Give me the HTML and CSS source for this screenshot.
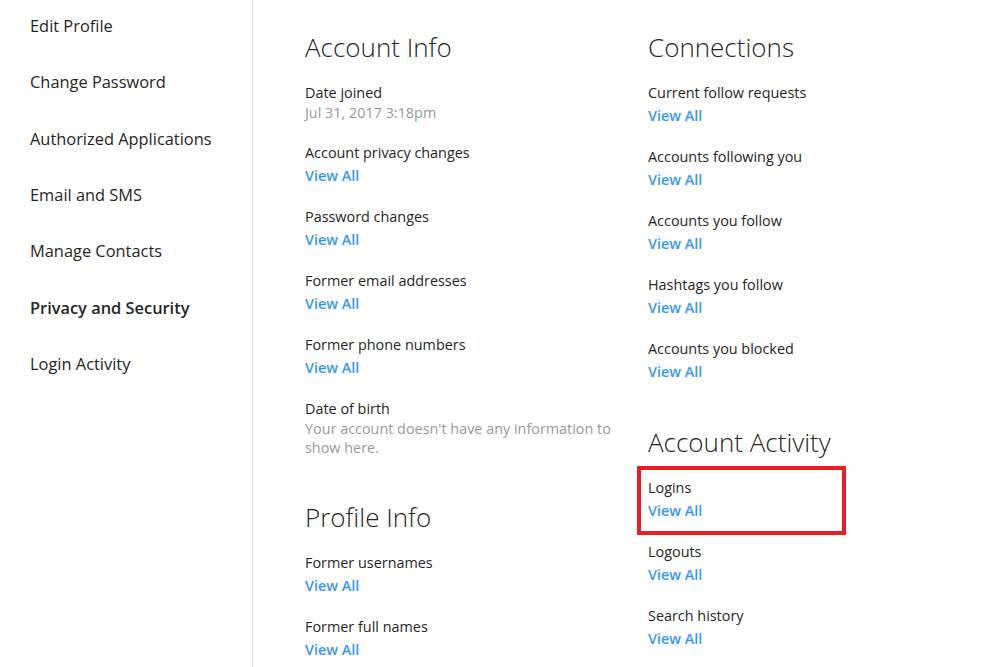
FILE: index.html
```html
<!DOCTYPE html>
<html>
<head>
<meta charset="utf-8">
<link rel="stylesheet" href="styles.css">
</head>
<body>
<div class="page">
  <nav class="sidebar">
    <a class="nav-item">Edit Profile</a>
    <a class="nav-item">Change Password</a>
    <a class="nav-item">Authorized Applications</a>
    <a class="nav-item">Email and SMS</a>
    <a class="nav-item">Manage Contacts</a>
    <a class="nav-item active">Privacy and Security</a>
    <a class="nav-item">Login Activity</a>
  </nav>
  <main class="main">
    <div class="column col-left">
      <section class="section">
        <h2 class="heading">Account Info</h2>
        <div class="item">
          <div class="label">Date joined</div>
          <div class="value">Jul 31, 2017 3:18pm</div>
        </div>
        <div class="item">
          <div class="label">Account privacy changes</div>
          <a class="link">View All</a>
        </div>
        <div class="item">
          <div class="label">Password changes</div>
          <a class="link">View All</a>
        </div>
        <div class="item">
          <div class="label">Former email addresses</div>
          <a class="link">View All</a>
        </div>
        <div class="item">
          <div class="label">Former phone numbers</div>
          <a class="link">View All</a>
        </div>
        <div class="item">
          <div class="label">Date of birth</div>
          <div class="value">Your account doesn't have any information to show here.</div>
        </div>
      </section>
      <section class="section">
        <h2 class="heading">Profile Info</h2>
        <div class="item">
          <div class="label">Former usernames</div>
          <a class="link">View All</a>
        </div>
        <div class="item">
          <div class="label">Former full names</div>
          <a class="link">View All</a>
        </div>
      </section>
    </div>
    <div class="column col-right">
      <section class="section">
        <h2 class="heading">Connections</h2>
        <div class="item">
          <div class="label">Current follow requests</div>
          <a class="link">View All</a>
        </div>
        <div class="item">
          <div class="label">Accounts following you</div>
          <a class="link">View All</a>
        </div>
        <div class="item">
          <div class="label">Accounts you follow</div>
          <a class="link">View All</a>
        </div>
        <div class="item">
          <div class="label">Hashtags you follow</div>
          <a class="link">View All</a>
        </div>
        <div class="item">
          <div class="label">Accounts you blocked</div>
          <a class="link">View All</a>
        </div>
      </section>
      <section class="section">
        <h2 class="heading">Account Activity</h2>
        <div class="item highlighted">
          <div class="label">Logins</div>
          <a class="link">View All</a>
        </div>
        <div class="item">
          <div class="label">Logouts</div>
          <a class="link">View All</a>
        </div>
        <div class="item">
          <div class="label">Search history</div>
          <a class="link">View All</a>
        </div>
      </section>
    </div>
  </main>
</div>
</body>
</html>
```
FILE: styles.css
```css
*, *::before, *::after { box-sizing: border-box; }
html, body {
  margin: 0;
  padding: 0;
  background: #fff;
  height: 100%;
  overflow: hidden;
}
body {
  font-family: "Open Sans", "Noto Sans", sans-serif;
  color: #262626;
}
.page {
  display: flex;
  height: 667px;
}
.sidebar {
  width: 253px;
  flex: none;
  border-right: 1px solid #dbe1ea;
  display: flex;
  flex-direction: column;
  margin-top: -2px;
}
.nav-item {
  display: block;
  padding: 16.17px 0 16.16px 30px;
  font-size: 16.4px;
  line-height: 24px;
  color: #262626;
  text-decoration: none;
}
.nav-item.active {
  font-weight: 600;
}
.main {
  flex: 1;
  display: flex;
  padding: 32px 0 0 52px;
}
.col-left {
  width: 343px;
  flex: none;
}
.col-right {
  flex: 1;
}
.section + .section {
  margin-top: 45px;
}
.heading {
  margin: 0 0 21px;
  font-size: 26px;
  font-weight: 300;
  line-height: 30px;
  color: #262626;
}
.item {
  margin-bottom: 21px;
  font-size: 14.4px;
}
.label {
  line-height: 20px;
}
.value {
  line-height: 19px;
  color: #999;
  max-width: 320px;
}
.link {
  display: block;
  margin-top: 3px;
  line-height: 20px;
  color: #3897f0;
  font-weight: 600;
  cursor: pointer;
}
.highlighted {
  position: relative;
}
.highlighted::before {
  content: "";
  position: absolute;
  left: -11px;
  top: -12px;
  width: 209px;
  height: 69px;
  border: 4px solid #ed1c24;
}
```
